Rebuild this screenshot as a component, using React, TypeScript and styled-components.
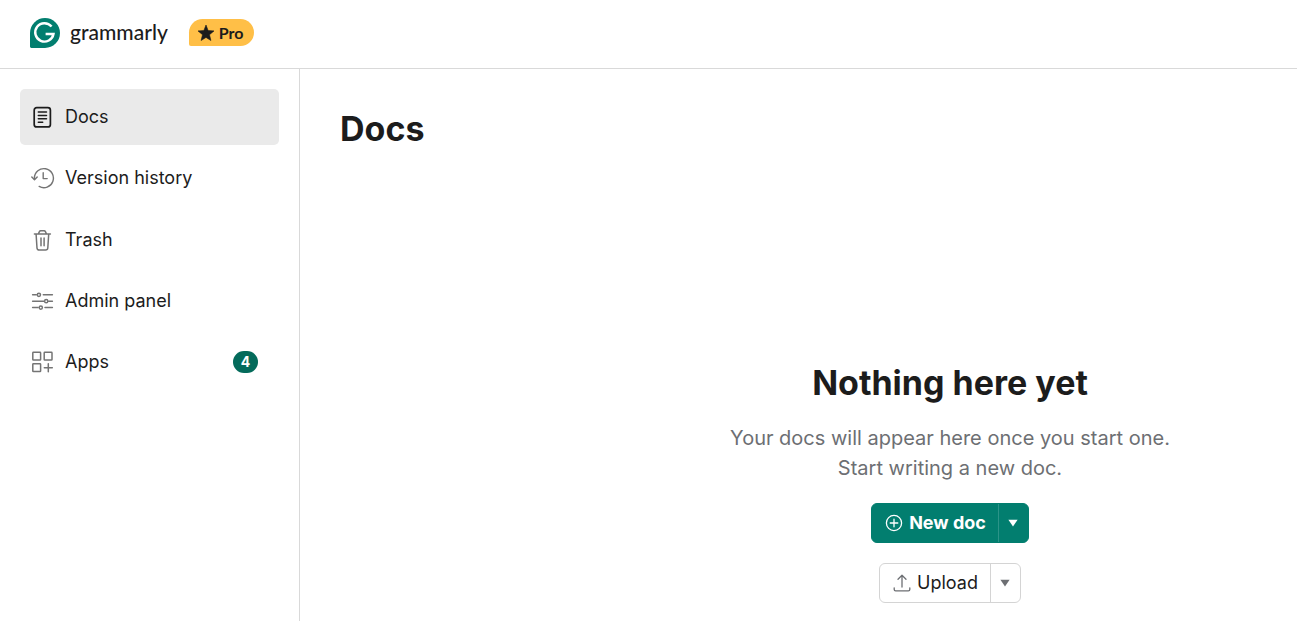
import React from "react";
import styled, { createGlobalStyle } from "styled-components";

const GlobalStyle = createGlobalStyle`
  *, *::before, *::after { box-sizing: border-box; }
  body {
    margin: 0;
    background: #fff;
    color: #1c1c1c;
    font-family: Inter, "Liberation Sans", sans-serif;
  }
  #root { min-height: 100vh; display: flex; }
`;

const Page = styled.div`
  flex: 1;
  min-width: 0;
  display: flex;
  flex-direction: column;
`;

const Header = styled.header`
  display: flex;
  align-items: center;
  height: 69px;
  padding: 0 30px 3px;
  border-bottom: 1px solid #d9d9d9;
`;

const Brand = styled.a`
  display: flex;
  align-items: center;
  gap: 10px;
  color: #1c1c1c;
  text-decoration: none;
`;

const Wordmark = styled.span`
  padding-bottom: 2px;
  font-family: Lato, sans-serif;
  font-size: 21px;
  font-weight: 500;
  line-height: 26px;
`;

const ProBadge = styled.span`
  display: flex;
  align-items: center;
  gap: 4px;
  height: 27px;
  margin-left: 21px;
  padding: 0 10px 0 8px;
  border-radius: 14px 14px 14px 2px;
  background: #ffbf47;
  font-family: Lato, sans-serif;
  font-size: 16px;
  font-weight: 700;
`;

const Body = styled.div`
  flex: 1;
  display: flex;
`;

const Sidebar = styled.aside`
  flex: 0 0 300px;
  padding: 20px;
  border-right: 1px solid #d9d9d9;
`;

const NavList = styled.ul`
  display: flex;
  flex-direction: column;
  justify-content: space-between;
  min-height: 301px;
  margin: 0;
  padding: 0;
  list-style: none;
`;

const NavLink = styled.a<{ $active?: boolean }>`
  display: flex;
  align-items: center;
  gap: 10px;
  height: 56px;
  padding: 0 21px 0 11px;
  border-radius: 5px;
  background: ${(p) => (p.$active ? "#eaeaea" : "transparent")};
  color: #1c1c1c;
  font-size: 18px;
  line-height: 24px;
  text-decoration: none;

  svg {
    color: ${(p) => (p.$active ? "#1c1c1c" : "#747474")};
  }
`;

const Count = styled.span`
  margin-left: auto;
  min-width: 25px;
  height: 22px;
  border-radius: 11px;
  background: #046b5b;
  color: #fff;
  font-size: 14px;
  font-weight: 700;
  line-height: 22px;
  text-align: center;
`;

const Main = styled.main`
  flex: 1;
  min-width: 0;
  padding: 40px;
`;

const Title = styled.h1`
  margin: 0;
  font-size: 34px;
  font-weight: 700;
  line-height: 40px;
`;

const Empty = styled.section`
  display: flex;
  flex-direction: column;
  align-items: center;
  margin-top: 214px;
  padding-left: 303px;
  text-align: center;
`;

const EmptyTitle = styled(Title).attrs({ as: "h2" })``;

const Message = styled.p`
  margin: 20px 0;
  color: #6d6f73;
  font-size: 20px;
  line-height: 30px;
`;

const SplitButton = styled.div<{ $primary?: boolean }>`
  display: flex;
  height: 40px;
  border: 1px solid ${(p) => (p.$primary ? "#027e6f" : "#d4d4d4")};
  border-radius: 6px;
  overflow: hidden;
  background: ${(p) => (p.$primary ? "#027e6f" : "#fff")};
  color: ${(p) => (p.$primary ? "#fff" : "#1c1c1c")};
  font-weight: ${(p) => (p.$primary ? 700 : 400)};

  & + & { margin-top: 20px; }

  button {
    border: 0;
    background: none;
    color: inherit;
    font: inherit;
    font-size: 18px;
    line-height: 36px;
    cursor: pointer;
  }

  svg { color: ${(p) => (p.$primary ? "#fff" : "#6d6f73")}; }
`;

const Action = styled.button`
  display: flex;
  align-items: center;
  gap: 6px;
  padding: 0 13px;
`;

const Caret = styled.button<{ $primary?: boolean }>`
  display: flex;
  align-items: center;
  justify-content: center;
  width: 29px;
  padding: 0;
  box-shadow: -1px 0 0 ${(p) => (p.$primary ? "#2b9488" : "#d4d4d4")};
`;

const Icon = ({ children, size = 24 }: { children: React.ReactNode; size?: number }) => (
  <svg
    width={size}
    height={size}
    viewBox={`0 0 ${size} ${size}`}
    fill="none"
    stroke="currentColor"
    strokeWidth="1.5"
    strokeLinecap="round"
    strokeLinejoin="round"
    aria-hidden="true"
  >
    {children}
  </svg>
);

const DocIcon = () => (
  <Icon>
    <rect x="3.2" y="2.7" width="16.2" height="19.2" rx="2.5" strokeWidth="1.7" />
    <path d="M7.3 7h8.2M7.3 10.4h8.2M7.3 13.8h8.2M7.3 17.3h4.4" strokeWidth="1.5" />
  </Icon>
);

const HistoryIcon = () => (
  <Icon>
    <path d="M3.4 13.3V12A9.5 9.5 0 1 1 8.2 20.4" strokeWidth="1.4" />
    <path d="M.8 10.9l2.7 2.8 2.7-2.8M12.2 6.8v5.8h4" strokeWidth="1.4" />
  </Icon>
);

const TrashIcon = () => (
  <Icon>
    <path d="M3.4 6h16M7.4 5.7l1-2.1c.3-.6.7-.8 1.2-.8h3.6c.5 0 .9.2 1.2.8l1 2.1M5.1 6.2l.9 13.8c.1 1.4.9 2.1 2.2 2.1h6.4c1.3 0 2.1-.7 2.2-2.1l.9-13.8M10 10v7.8M13.1 10v7.8" />
  </Icon>
);

const SlidersIcon = () => (
  <Icon>
    <path d="M1.6 5.8h3.7M12.3 5.8h9.1M1.6 12.2h11.2M17.6 12.2h3.8M1.6 18.6h5.5M14 18.6h7.4" />
    <circle cx="7.9" cy="5.8" r="1.6" />
    <circle cx="15.2" cy="12.2" r="1.6" />
    <circle cx="9.8" cy="18.6" r="1.6" />
  </Icon>
);

const AppsIcon = () => (
  <Icon>
    <rect x="1.8" y="2.3" width="7.8" height="7.8" rx=".6" />
    <rect x="13.2" y="2.3" width="7.8" height="7.8" rx=".6" />
    <rect x="1.8" y="13.7" width="7.8" height="7.8" rx=".6" />
    <path d="M17.3 13.8v8M13.3 17.8h8" />
  </Icon>
);

const PlusCircleIcon = () => (
  <Icon size={18}>
    <circle cx="9" cy="9" r="7.6" strokeWidth="1.3" />
    <path d="M9 5.2v7.6M5.2 9h7.6" strokeWidth="1.3" />
  </Icon>
);

const UploadIcon = () => (
  <Icon size={18}>
    <path d="M9 13V1.5M5 5.3l4-4 4 4M1.2 13.8v1.6c0 .9.6 1.4 1.4 1.4h12.8c.8 0 1.4-.5 1.4-1.4v-1.6" strokeWidth="1.3" />
  </Icon>
);

const CaretIcon = () => (
  <svg width="10" height="8" viewBox="0 0 10 8" aria-hidden="true">
    <path d="M.4.8h9.2L5 7.4z" fill="currentColor" />
  </svg>
);

const Logo = () => (
  <svg width="30" height="30" viewBox="0 0 30 30" aria-hidden="true">
    <path d="M15 0a15 15 0 1 1 0 30H1.4C.6 30 0 29.4 0 28.6V15A15 15 0 0 1 15 0z" fill="#027e6f" />
    <path d="M21.6 8.6A9.2 9.2 0 1 0 23.5 16H15.6" fill="none" stroke="#fff" strokeWidth="2.4" />
  </svg>
);

const StarIcon = () => (
  <svg width="18" height="18" viewBox="0 0 18 18" aria-hidden="true">
    <path d="M9 1l2.1 5.5 5.9.4-4.5 3.8 1.4 5.8L9 13.4l-4.9 3.1 1.4-5.8L1 6.9l5.9-.4z" fill="#1c1c1c" stroke="#1c1c1c" strokeWidth=".6" strokeLinejoin="round" />
  </svg>
);

const navItems = [
  { label: "Docs", icon: <DocIcon />, active: true },
  { label: "Version history", icon: <HistoryIcon /> },
  { label: "Trash", icon: <TrashIcon /> },
  { label: "Admin panel", icon: <SlidersIcon /> },
  { label: "Apps", icon: <AppsIcon />, count: 4 },
];

export default function App() {
  return (
    <>
      <GlobalStyle />
      <Page>
        <Header>
          <Brand href="#">
            <Logo />
            <Wordmark>grammarly</Wordmark>
          </Brand>
          <ProBadge>
            <StarIcon />
            Pro
          </ProBadge>
        </Header>
        <Body>
          <Sidebar>
            <nav>
              <NavList>
                {navItems.map((item) => (
                  <li key={item.label}>
                    <NavLink href="#" $active={item.active} aria-current={item.active ? "page" : undefined}>
                      {item.icon}
                      {item.label}
                      {item.count && <Count>{item.count}</Count>}
                    </NavLink>
                  </li>
                ))}
              </NavList>
            </nav>
          </Sidebar>
          <Main>
            <Title>Docs</Title>
            <Empty>
              <EmptyTitle>Nothing here yet</EmptyTitle>
              <Message>
                Your docs will appear here once you start one.
                <br />
                Start writing a new doc.
              </Message>
              <SplitButton $primary>
                <Action type="button">
                  <PlusCircleIcon />
                  New doc
                </Action>
                <Caret type="button" $primary aria-label="More new doc options">
                  <CaretIcon />
                </Caret>
              </SplitButton>
              <SplitButton>
                <Action type="button">
                  <UploadIcon />
                  Upload
                </Action>
                <Caret type="button" aria-label="More upload options">
                  <CaretIcon />
                </Caret>
              </SplitButton>
            </Empty>
          </Main>
        </Body>
      </Page>
    </>
  );
}
